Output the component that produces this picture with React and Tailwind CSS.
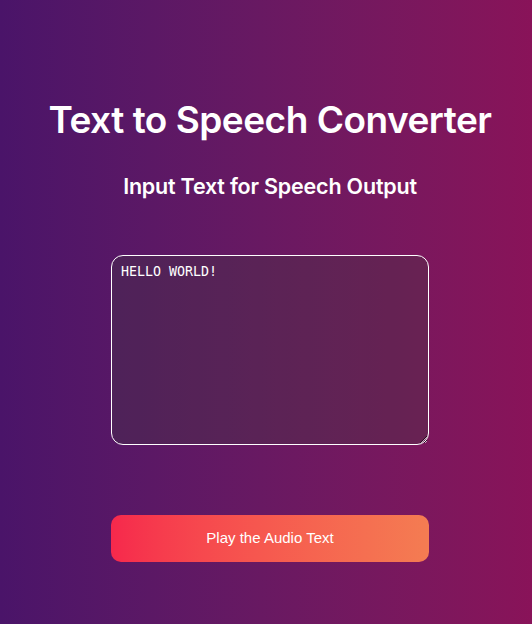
export default function App() {
  return (
    <div className="min-h-[624px] w-full bg-gradient-to-r from-[#4a1469] to-[#891359] font-['Inter',sans-serif] text-white">
      <div className="flex flex-col items-center pl-[8px] pt-[96px]">
        <h1 className="text-[37px] font-semibold leading-[48px] tracking-[-0.5px]">
          Text to Speech Converter
        </h1>
        <h2 className="mt-[28px] text-[21.5px] font-semibold leading-[28px] tracking-[-0.2px]">
          Input Text for Speech Output
        </h2>
        <textarea
          defaultValue="HELLO WORLD!"
          className="mt-[55px] h-[190px] w-[318px] rounded-[12px] border border-white bg-[#3c3c3c4d] px-[9px] py-[7px] font-['DejaVu_Sans_Mono',monospace] text-[13.3px] leading-[17px] text-white outline-none"
        />
        <button className="mt-[70px] h-[47px] w-[318px] rounded-[10px] bg-gradient-to-r from-[#f6284c] to-[#f47c52] font-['Liberation_Sans',Arial,sans-serif] text-[15px] text-white">
          Play the Audio Text
        </button>
      </div>
    </div>
  );
}
